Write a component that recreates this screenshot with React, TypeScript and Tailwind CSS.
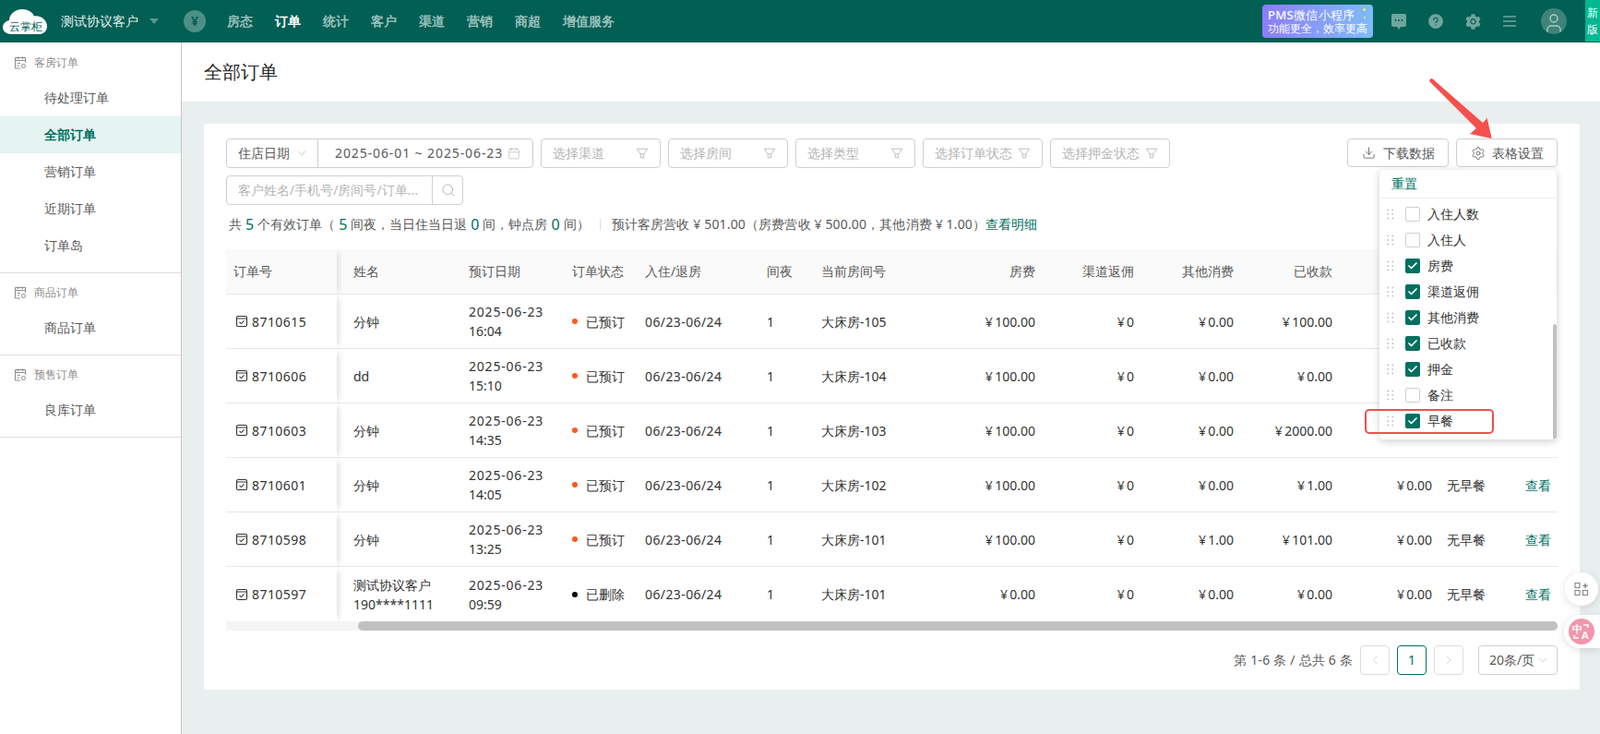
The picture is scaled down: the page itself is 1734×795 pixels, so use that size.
import { AiFillQuestionCircle, AiFillSetting } from "react-icons/ai";
import { ChevronDown, ChevronLeft, ChevronRight, Check, Search, Settings, Download, Calendar, User } from "lucide-react";

const FONT = "[font-family:Inter,'Noto_Sans_CJK_SC',sans-serif]";

const navItems = ["房态", "订单", "统计", "客户", "渠道", "营销", "商超", "增值服务"];

const orders = [
  { id: "8710615", name: ["分钟"], time: "16:04", status: "已预订", room: "大床房-105", fee: "100.00", other: "0.00", paid: "100.00" },
  { id: "8710606", name: ["dd"], time: "15:10", status: "已预订", room: "大床房-104", fee: "100.00", other: "0.00", paid: "0.00" },
  { id: "8710603", name: ["分钟"], time: "14:35", status: "已预订", room: "大床房-103", fee: "100.00", other: "0.00", paid: "2000.00" },
  { id: "8710601", name: ["分钟"], time: "14:05", status: "已预订", room: "大床房-102", fee: "100.00", other: "0.00", paid: "1.00" },
  { id: "8710598", name: ["分钟"], time: "13:25", status: "已预订", room: "大床房-101", fee: "100.00", other: "1.00", paid: "101.00" },
  { id: "8710597", name: ["测试协议客户", "190****1111"], time: "09:59", status: "已删除", room: "大床房-101", fee: "0.00", other: "0.00", paid: "0.00" },
];

const columnOptions = [
  { label: "入住人数", on: false },
  { label: "入住人", on: false },
  { label: "房费", on: true },
  { label: "渠道返佣", on: true },
  { label: "其他消费", on: true },
  { label: "已收款", on: true },
  { label: "押金", on: true },
  { label: "备注", on: false },
  { label: "早餐", on: true },
];

function Funnel({ className }: { className?: string }) {
  return (
    <svg viewBox="0 0 16 16" fill="none" stroke="currentColor" strokeWidth="1" className={className}>
      <path d="M1.5 2.5h13L10 9v4.5H6V9zM6 9h4" strokeLinejoin="round" />
    </svg>
  );
}

function OrderIcon() {
  return (
    <svg viewBox="0 0 14 14" fill="none" stroke="#333" strokeWidth="1.1" className="h-[14px] w-[14px] shrink-0">
      <rect x="1.5" y="1.5" width="11" height="11" rx="1.5" />
      <path d="M1.5 4h11M4.5 7.8l2 1.8 3-3.2" />
    </svg>
  );
}

function GroupIcon() {
  return (
    <svg viewBox="0 0 14 14" fill="none" stroke="#8c8c8c" strokeWidth="1" className="h-[14px] w-[14px] shrink-0">
      <path d="M7 13H1.500V1.500h11V7M1.500 4.500h11M4.500 0.500v2.500M9.500 0.500v2.500M4 7.500h3M4 10h2" />
      <circle cx="10.500" cy="10.500" r="2" />
    </svg>
  );
}

function DragDots() {
  return (
    <svg viewBox="0 0 8 12" fill="#c4c4c4" className="h-3 w-2 shrink-0">
      <circle cx="1.2" cy="1.5" r="1" />
      <circle cx="6.2" cy="1.5" r="1" />
      <circle cx="1.2" cy="6" r="1" />
      <circle cx="6.2" cy="6" r="1" />
      <circle cx="1.2" cy="10.5" r="1" />
      <circle cx="6.2" cy="10.5" r="1" />
    </svg>
  );
}

function Logo() {
  return (
    <div className="relative h-[30px] w-[48px] shrink-0">
      <svg viewBox="0 0 48 32" preserveAspectRatio="none" fill="white" className="h-full w-full">
        <path d="M9 31C3 31 0 27 0 23c0-4 3-7 7-8 0-7 6-13 14-13 6 0 11 3 13 8 8-1 14 5 14 12 0 5-4 9-9 9z" />
      </svg>
      <span className="absolute left-[7px] top-[14px] text-[12px] leading-[13px] font-medium whitespace-nowrap text-[#015f54]">云掌柜</span>
    </div>
  );
}

function TopBar() {
  return (
    <header className="flex h-[46px] shrink-0 items-center bg-[#015f54]">
      <div className="ml-[3px]">
        <Logo />
      </div>
      <span className="ml-[15px] text-sm font-medium text-white/90">测试协议客户</span>
      <span className="ml-[12px] h-0 w-0 border-x-[5px] border-t-[6px] border-x-transparent border-t-white/35" />
      <div className="ml-[27px] flex h-6 w-6 items-center justify-center rounded-full bg-[#4f9085] text-sm font-bold text-[#015f54]">¥</div>
      <nav className="ml-[23px] flex gap-6">
        {navItems.map((item) => (
          <span key={item} className={`text-sm font-bold ${item === "订单" ? "text-white" : "text-white/60"}`}>
            {item}
          </span>
        ))}
      </nav>
      <div className="ml-auto flex h-full items-center">
        <div className="relative flex h-[36px] w-[120px] flex-col justify-center overflow-hidden rounded bg-gradient-to-r from-[#8c7cf9] to-[#7dbcf8] pl-[6px] text-white">
          <span className="text-[13px] leading-[16px] font-medium tracking-[0.3px]">PMS微信小程序</span>
          <span className="text-[11.5px] leading-[14px] font-medium">功能更全，效率更高</span>
          <span className="absolute right-[8px] top-[4px] h-[3px] w-[3px] rounded-full bg-[#f6e96a]" />
          <span className="absolute right-[8px] top-[13px] h-[2px] w-[2px] rounded-full bg-[#f6e96a]" />
        </div>
        <div className="ml-[8px] flex text-[#6fa69d]">
          <span className="flex h-6 w-10 items-center justify-center">
            <svg viewBox="0 0 16 17" className="h-[17px] w-4">
              <path d="M2 0h12a2 2 0 0 1 2 2v10a2 2 0 0 1-2 2h-4l-2 3-2-3H2a2 2 0 0 1-2-2V2a2 2 0 0 1 2-2z" fill="currentColor" />
              <circle cx="4.500" cy="7" r="1" fill="#015f54" />
              <circle cx="8" cy="7" r="1" fill="#015f54" />
              <circle cx="11.500" cy="7" r="1" fill="#015f54" />
            </svg>
          </span>
          <span className="flex h-6 w-10 items-center justify-center">
            <AiFillQuestionCircle size={18} />
          </span>
          <span className="flex h-6 w-10 items-center justify-center">
            <AiFillSetting size={19} />
          </span>
          <span className="flex h-6 w-10 items-center justify-center">
            <svg viewBox="0 0 14 12" fill="none" stroke="currentColor" strokeWidth="1.6" className="h-3 w-[14px]">
              <path d="M0 1h14M0 6h14M0 11h14" />
            </svg>
          </span>
        </div>
        <div className="ml-[14px] flex h-[28px] w-[28px] items-center justify-center overflow-hidden rounded-full bg-[#3f8378] text-[#a9cbc5]">
          <User size={24} strokeWidth={1.5} className="mt-[3px]" />
        </div>
        <div className="ml-[20px] flex h-[45px] w-[16px] flex-col items-center justify-center self-start bg-[#00b894] text-[12px] leading-[18px] text-white">
          <span>新</span>
          <span>版</span>
        </div>
      </div>
    </header>
  );
}

function SideGroup({ title, items, active }: { title: string; items: string[]; active?: string }) {
  return (
    <div className="border-b border-[#dedede] pb-[9px] pt-[3px]">
      <div className="flex h-[36px] items-center gap-[8px] pl-[15px] text-xs text-[#8c8c8c]">
        <GroupIcon />
        <span>{title}</span>
      </div>
      {items.map((item) => (
        <div
          key={item}
          className={`flex h-[40px] items-center pl-[48px] text-sm ${
            item === active ? "bg-[#e4f4f0] font-bold text-[#00705f]" : "text-[#595959]"
          }`}
        >
          {item}
        </div>
      ))}
    </div>
  );
}

function Sidebar() {
  return (
    <aside className="w-[197px] shrink-0 border-r border-[#c6c6c6] bg-white pt-[1px]">
      <SideGroup title="客房订单" items={["待处理订单", "全部订单", "营销订单", "近期订单", "订单岛"]} active="全部订单" />
      <SideGroup title="商品订单" items={["商品订单"]} />
      <SideGroup title="预售订单" items={["良库订单"]} />
    </aside>
  );
}

function FilterSelect({ label }: { label: string }) {
  return (
    <div className="flex h-8 w-[130px] items-center justify-between rounded border border-[#d0d0d0] px-[12px] text-sm text-[#b5b5b5]">
      <span className="truncate">{label}</span>
      <Funnel className="h-[14px] w-[14px] shrink-0" />
    </div>
  );
}

function Filters() {
  return (
    <div className="flex items-start justify-between">
      <div className="flex flex-col gap-2">
        <div className="flex gap-2">
          <div className="flex h-8 w-[333px] items-center rounded border border-[#d0d0d0] text-sm">
            <div className="flex h-full w-[99px] items-center justify-between border-r border-[#d0d0d0] pl-[12px] pr-[10px] text-[#595959]">
              <span>住店日期</span>
              <ChevronDown size={14} strokeWidth={1} className="text-[#999]" />
            </div>
            <span className="ml-[18px] whitespace-nowrap tracking-[0.9px] text-[#595959]">2025-06-01 ~ 2025-06-23</span>
            <Calendar size={14} strokeWidth={1} className="ml-[5px] shrink-0 text-[#aaa]" />
          </div>
          {["选择渠道", "选择房间", "选择类型", "选择订单状态", "选择押金状态"].map((f) => (
            <FilterSelect key={f} label={f} />
          ))}
        </div>
        <div className="flex h-8 w-[257px] items-center rounded border border-[#d0d0d0] text-sm text-[#b5b5b5]">
          <span className="w-[223px] whitespace-nowrap border-r border-[#d0d0d0] pl-[12px] leading-[30px]">客户姓名/手机号/房间号/订单...</span>
          <Search size={16} strokeWidth={1} className="ml-[9px] text-[#999]" />
        </div>
      </div>
      <div className="flex gap-2 text-sm text-[#595959]">
        <button type="button" className="flex h-[31px] w-[110px] items-center justify-center gap-[8px] rounded border border-[#d0d0d0]">
          <Download size={15} strokeWidth={1.3} />
          下载数据
        </button>
        <button type="button" className="flex h-[31px] w-[110px] items-center justify-center gap-[7px] rounded border border-[#d0d0d0]">
          <Settings size={16} strokeWidth={1.2} />
          表格设置
        </button>
      </div>
    </div>
  );
}

function Summary() {
  const num = "mx-[4px] text-base text-[#00705f]";
  return (
    <p className="mt-[11px] flex h-[20px] items-center whitespace-nowrap pl-[3px] text-sm text-[#595959]">
      共<span className={num}>5</span>个有效订单（<span className={num}>5</span>间夜，当日住当日退<span className={num}>0</span>间，钟点房
      <span className={num}>0</span>间）
      <span className="ml-[11px] mr-[12px] h-[12px] w-px bg-[#dedede]" />
      <span className="tracking-[0.15px]">预计客房营收 ¥ 501.00（房费营收 ¥ 500.00，其他消费 ¥ 1.00）</span>
      <span className="text-[#00705f]">查看明细</span>
    </p>
  );
}

function Money({ v }: { v: string }) {
  return <>¥{"\u2009"}{v}</>;
}

function OrderTable() {
  const th = "h-[49px] border-b border-[#e8e8e8] bg-[#fafafa] px-2 text-sm font-normal text-[#595959]";
  const fixedShadow = "shadow-[6px_0_6px_-4px_rgba(0,0,0,0.14)]";
  return (
    <div className="mt-[17px] w-[1443px] overflow-hidden">
      <table className="w-[1443px] table-fixed border-separate border-spacing-0">
        <colgroup>
          <col className="w-[120px]" />
          <col className="w-[135px]" />
          <col className="w-[112px]" />
          <col className="w-[79px]" />
          <col className="w-[132px]" />
          <col className="w-[59px]" />
          <col className="w-[138px]" />
          <col className="w-[110px]" />
          <col className="w-[107px]" />
          <col className="w-[108px]" />
          <col className="w-[107px]" />
          <col className="w-[108px]" />
          <col className="w-[85px]" />
          <col className="w-[43px]" />
        </colgroup>
        <thead>
          <tr>
            <th className={`${th} relative text-left ${fixedShadow}`}>订单号</th>
            <th className={`${th} pl-[18px] text-left`}>姓名</th>
            <th className={`${th} text-left`}>预订日期</th>
            <th className={`${th} text-left`}>订单状态</th>
            <th className={`${th} text-left`}>入住/退房</th>
            <th className={`${th} text-left`}>间夜</th>
            <th className={`${th} text-left`}>当前房间号</th>
            <th className={`${th} text-right`}>房费</th>
            <th className={`${th} text-right`}>渠道返佣</th>
            <th className={`${th} text-right`}>其他消费</th>
            <th className={`${th} text-right`}>已收款</th>
            <th className={`${th} text-right`}>押金</th>
            <th className={`${th} text-left`}>早餐</th>
            <th className={`${th} text-left`} />
          </tr>
        </thead>
        <tbody>
          {orders.map((o, i) => {
            const td = `h-[59px] px-2 text-sm leading-[21px] text-[#333] ${i === orders.length - 1 ? "" : "border-b border-[#e8e8e8]"}`;
            return (
              <tr key={o.id}>
                <td className={`${td} relative ${fixedShadow} pl-[10px]`}>
                  <div className="flex items-center gap-[4px] tracking-[0.45px]">
                    <OrderIcon />
                    {o.id}
                  </div>
                </td>
                <td className={`${td} pl-[18px]`}>
                  {o.name.map((line) => (
                    <div key={line} className="whitespace-nowrap">{line}</div>
                  ))}
                </td>
                <td className={td}>
                  <div className="whitespace-nowrap tracking-[0.8px]">2025-06-23</div>
                  <div>{o.time}</div>
                </td>
                <td className={td}>
                  <div className="flex items-center gap-[9px] whitespace-nowrap">
                    <span className={`h-[6px] w-[6px] shrink-0 rounded-full ${o.status === "已删除" ? "bg-black" : "bg-[#ff5a1f]"}`} />
                    {o.status}
                  </div>
                </td>
                <td className={`${td} whitespace-nowrap tracking-[0.4px]`}>06/23-06/24</td>
                <td className={td}>1</td>
                <td className={td}>{o.room}</td>
                <td className={`${td} text-right`}><Money v={o.fee} /></td>
                <td className={`${td} text-right`}><Money v="0" /></td>
                <td className={`${td} text-right`}><Money v={o.other} /></td>
                <td className={`${td} whitespace-nowrap text-right`}><Money v={o.paid} /></td>
                <td className={`${td} text-right`}><Money v="0.00" /></td>
                <td className={`${td} whitespace-nowrap`}>无早餐</td>
                <td className={`${td} whitespace-nowrap !text-[#00705f]`}>查看</td>
              </tr>
            );
          })}
        </tbody>
      </table>
      <div className="h-[10px] bg-[#f5f5f5] pl-[143px]">
        <div className="h-full rounded-full bg-[#c1c1c1]" />
      </div>
    </div>
  );
}

function Pagination() {
  const box = "flex h-8 w-8 items-center justify-center rounded border border-[#dcdcdc] text-[#c4c4c4]";
  return (
    <div className="mt-[16px] flex items-center justify-end text-sm text-[#595959]">
      <span className="mr-[8px] tracking-[0.2px]">第 1-6 条 / 总共 6 条</span>
      <div className={box}>
        <ChevronLeft size={16} strokeWidth={1} />
      </div>
      <div className="ml-2 flex h-8 w-8 items-center justify-center rounded border border-[#00705f] text-[#00705f]">1</div>
      <div className={`${box} ml-2`}>
        <ChevronRight size={16} strokeWidth={1} />
      </div>
      <div className="ml-[16px] flex h-8 w-[86px] items-center rounded border border-[#d0d0d0] pl-[11px]">
        <span className="whitespace-nowrap">20条/页</span>
        <ChevronDown size={14} strokeWidth={1} className="ml-[2px] text-[#aaa]" />
      </div>
    </div>
  );
}

function ColumnMenu() {
  return (
    <div className="absolute right-[25px] top-[50px] z-10 h-[292px] w-[192px] overflow-hidden rounded bg-white shadow-[0_2px_8px_rgba(0,0,0,0.2)]">
      <div className="flex h-[31px] items-center border-b border-[#eeeeee] pl-[13px] text-sm font-medium text-[#00705f]">重置</div>
      <div className="pt-[3px]">
        {columnOptions.map((opt) => (
          <div key={opt.label} className="flex h-[28px] items-center pl-[8px] text-sm text-[#333]">
            <DragDots />
            <span
              className={`ml-[12px] flex h-4 w-4 items-center justify-center rounded-[2px] ${
                opt.on ? "bg-[#00705f]" : "border border-[#d0d0d0] bg-white"
              }`}
            >
              {opt.on && <Check size={12} strokeWidth={3.5} className="text-white" />}
            </span>
            <span className="ml-2">{opt.label}</span>
          </div>
        ))}
      </div>
      <div className="absolute bottom-0 right-0 h-[125px] w-1 rounded-full bg-[#c1c1c1]" />
    </div>
  );
}

function Annotations() {
  return (
    <>
      <svg viewBox="0 0 74 68" className="absolute left-[1325px] top-[-50px] z-20 h-[68px] w-[74px]">
        <path d="M3 4 Q3.500 1 6 1 L61 49 L65.700 44 L70.700 66 L47 61 L54 55 Z" fill="#f6504e" />
      </svg>
      <div className="absolute left-[1258px] top-[309px] z-20 h-[27px] w-[140px] rounded-[5px] border-[2.5px] border-[#f0504e]" />
    </>
  );
}

export default function App() {
  return (
    <div className={`relative flex h-[795px] flex-col overflow-hidden bg-[#e9efee] ${FONT}`}>
      <TopBar />
      <div className="flex min-h-0 flex-1">
        <Sidebar />
        <main className="min-w-0 flex-1">
          <div className="flex h-[64px] items-center bg-white pl-[24px] text-xl font-medium text-[#262626]">全部订单</div>
          <div className="pl-[24px] pr-[22px] pt-[24px]">
            <section className="relative h-[613px] bg-white px-[24px] pt-[16px]">
              <Filters />
              <Summary />
              <OrderTable />
              <Pagination />
              <ColumnMenu />
              <Annotations />
            </section>
          </div>
        </main>
      </div>
      <div className="absolute left-[1696px] top-[620px] flex h-9 w-9 items-center justify-center rounded-full bg-white shadow-[0_2px_8px_rgba(0,0,0,0.12)]">
        <svg viewBox="0 0 16 16" fill="none" stroke="#8c8c8c" strokeWidth="1.2" className="h-4 w-4">
          <rect x="1" y="1.5" width="5" height="5" />
          <rect x="1" y="9.5" width="5" height="5" />
          <rect x="9.5" y="9.5" width="5" height="5" />
          <path d="M12 1l1 2.500L15.500 4.500 13 5.500 12 8l-1-2.500L8.500 4.500 11 3.500z" fill="#8c8c8c" stroke="none" />
        </svg>
      </div>
      <div className="absolute left-[1695px] top-[666px] flex h-9 w-[39px] items-center rounded-l-full bg-white pl-[5px] shadow-[0_2px_8px_rgba(0,0,0,0.12)]">
        <div className="relative h-7 w-7 rounded-full bg-[#f295ad] font-bold text-white">
          <span className="absolute left-[4px] top-[5px] text-[11px] leading-[11px]">中</span>
          <span className="absolute left-[14px] top-[12px] text-[11px] leading-[11px]">A</span>
          <svg viewBox="0 0 28 28" fill="none" stroke="white" strokeWidth="1.5" className="absolute inset-0">
            <path d="M16 7h5v3M6 18v3h5" />
          </svg>
        </div>
      </div>
    </div>
  );
}
